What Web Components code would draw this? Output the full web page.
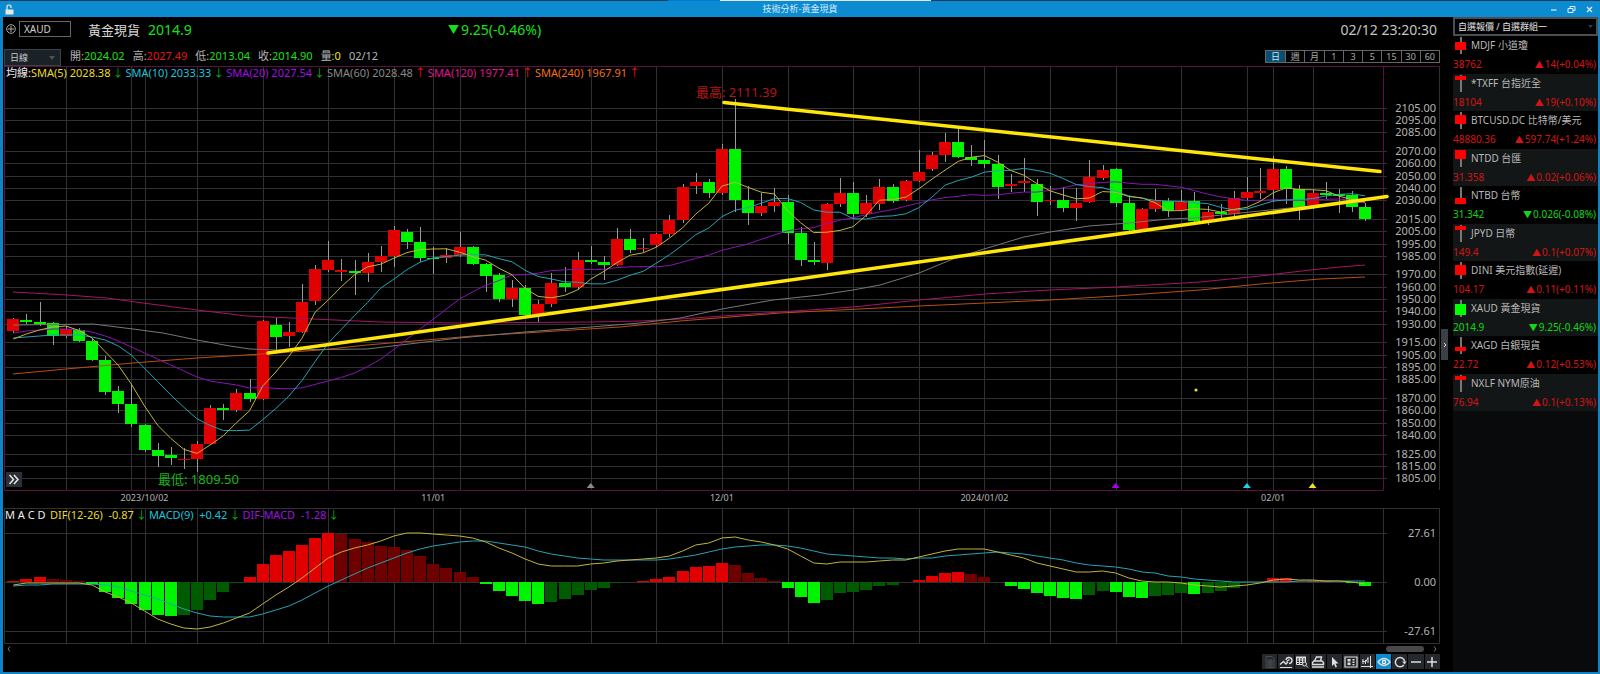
<!DOCTYPE html>
<html lang="zh-Hant">
<head>
<meta charset="utf-8">
<title>技術分析-黃金現貨</title>
<style>
html, body { margin: 0; min-height: 100%; background: #000; }
body { font-family: "Noto Sans", "Noto Sans CJK TC", sans-serif; font-size: 11px; color: #b4b4b4; }
</style>
</head>
<body>
<ta-window></ta-window>

<script>
const define = (name, html, init) => {
  const tpl = document.createElement('template');
  tpl.innerHTML = `<style>*{box-sizing:border-box}button,input,select{font-family:inherit;margin:0;border-radius:0;outline:none}</style>` + html;
  customElements.define(name, class extends HTMLElement {
    constructor() {
      super();
      this.attachShadow({ mode: 'open' }).append(tpl.content.cloneNode(true));
    }
    connectedCallback() { if (init) init(this, this.shadowRoot); }
  });
};

/* ---------- series data, in plot units ---------- */
const FIRST_X = 13.3, STEP = 13.123;
const xAt = i => +(FIRST_X + i * STEP).toFixed(1);

// direction, high, body top, body bottom, low
const candles = `
r 318 319 331 333|g 314 320 322 324|g 302 322 324 326|g 322 323 336 345|r 326 329 336 338|g 328 330 341 342|g 339 341 360 361|g 356 360 392 395|g 386 391 404 413|g 384 404 424 427
g 424 425 450 452|g 443 450 456 467|g 447 455 458 465|r 448 459 460 469|r 441 444 459 472|r 405 408 444 445|g 404 408 410 420|r 389 393 410 412|g 379 393 399 402|r 320 321 399 400
g 318 325 337 350|r 322 332 336 347|r 284 302 332 333|r 265 269 301 305|r 241 260 270 272|r 259 270 272 281|g 260 271 273 295|r 253 262 273 282|r 246 256 262 272|r 226 230 256 267
g 229 232 242 249|g 227 242 258 262|g 247 258 259 274|r 248 255 258 263|r 232 247 255 257|g 246 247 264 265|g 263 264 276 292|g 273 275 299 302|r 280 288 299 307|g 285 288 315 318
r 300 304 315 322|r 273 283 304 307|g 267 283 287 292|r 252 260 287 290|g 246 260 262 264|g 256 262 265 280|r 228 239 265 266|g 229 239 250 253|r 238 248 249 252|r 233 234 245 247
r 215 220 234 237|r 184 187 220 223|r 173 182 186 194|g 179 182 193 198|r 144 149 193 195|g 99 149 200 212|g 186 200 213 225|r 193 206 213 216|r 188 202 206 212|g 195 202 233 244
g 227 233 260 266|g 242 260 262 265|r 203 204 263 270|r 178 193 204 207|g 182 193 214 219|r 195 203 214 217|r 179 187 204 210|g 184 187 201 203|r 180 181 200 201|r 150 172 181 182
r 152 155 169 171|r 133 142 155 162|g 129 142 157 158|g 145 157 160 166|g 140 160 164 168|g 155 164 187 199|r 174 184 186 192|r 158 181 183 192|g 179 184 202 216|r 186 200 201 205
g 187 200 208 212|r 188 203 208 221|r 160 177 202 203|r 165 170 178 180|g 168 169 203 207|g 196 203 230 234|r 208 209 229 230|r 189 201 209 212|g 198 201 211 217|r 190 202 210 211
g 192 201 221 222|r 206 212 221 225|g 204 212 214 219|r 191 198 214 216|r 177 192 198 201|r 168 191 193 199|r 156 169 190 202|g 166 169 189 204|g 185 189 207 220|r 189 193 205 209
g 182 193 195 199|g 189 194 196 213|g 191 195 207 212|g 203 207 219 221`
  .trim().split(/[|\n]/).map(s => { const [d, ...n] = s.split(' '); return [d, ...n.map(Number)]; });

const closes = candles.map(c => c[0] === 'r' ? c[2] : c[3]);
const average = (n, seed) => closes.map((_, i) =>
  i < n - 1 ? seed[i] : closes.slice(i - n + 1, i + 1).reduce((a, b) => a + b) / n);

const sma5 = average(5, [339, 334, 330, 327]);
const sma10 = average(10, [338, 337, 336, 335, 335, 335, 337, 340, 346]);
const sma20 = average(20, [333, 331, 330, 329, 329, 330, 332, 336, 341, 347, 353, 359, 365, 371, 377, 381, 383, 385, 388]);
const sma60 = '13,325 93,324 133,329 163,333 197,340 230,346 250,349 277,350 367,349 459,338 525,332 591,327 640,323 680,318 722,309 773,300 820,295 853,290 880,285 919,273 953,259 984,249 1024,237 1050,232 1089,226 1129,223 1168,219 1193,218 1250,212 1310,206 1365,202';
const sma120 = '13,292 67,295 107,298 143,303 197,310 247,316 313,319 380,322 459,323 591,322 640,321 680,319 780,312 853,307 919,300 985,294 1050,290 1116,287 1200,282 1260,276 1310,270 1340,267 1365,265';
const sma240 = '13,374 66,369 133,363 197,358 262,354 320,350 367,345 473,336 525,333 620,327 680,321 780,313 919,306 985,303 1050,300 1116,296 1200,290 1260,284 1320,279 1365,277';

const monthMarks = [[10, '2023/10/02'], [32, '11/01'], [54, '12/01'], [74, '2024/01/02'], [96, '02/01']];
const columns = [4, 9, 10, 14, 19, 24, 29, 32, 34, 39, 44, 49, 54, 59, 64, 69, 74, 79, 84, 89, 94, 96, 99];
const prices = [2105, 2095, 2085, 2070, 2060, 2050, 2040, 2030, 2015, 2005, 1995, 1985, 1970, 1960, 1950, 1940, 1930, 1915, 1905, 1895, 1885, 1870, 1860, 1850, 1840, 1825, 1815, 1805];
const yPrice = p => Math.round(107.6 + (2105 - p) * 1.2357);

// histogram ends (zero line at 582) and the two lines over it
const ZERO = 582;
const bars = [581, 579, 577, 579, 580, 581, 584, 592, 598, 604, 610, 615, 616, 615, 610, 600, 592, 583, 577, 564, 555, 551, 545, 538, 533, 534, 539, 542, 546, 547, 550, 556, 564, 568, 572, 577, 584, 591, 596, 601, 604, 602, 599, 595, 590, 588, 583, 582, 581, 579, 577, 571, 567, 566, 563, 565, 573, 578, 581, 588, 597, 603, 600, 593, 592, 590, 586, 585, 582, 580, 576, 573, 572, 574, 577, 582, 586, 589, 593, 596, 598, 599, 595, 591, 592, 597, 598, 596, 595, 593, 594, 593, 591, 588, 583, 582, 578, 578, 581, 581, 581, 582, 583, 586];
const dif = [585, 583, 583, 583, 583, 583, 585, 592, 597, 603, 611, 619, 624, 628, 629, 627, 623, 618, 613, 604, 595, 587, 578, 568, 558, 552, 548, 545, 541, 536, 533, 533, 534, 535, 536, 538, 542, 548, 553, 559, 564, 566, 566, 566, 564, 563, 561, 560, 559, 558, 556, 551, 545, 543, 538, 537, 540, 542, 545, 549, 556, 563, 564, 562, 562, 562, 561, 560, 560, 557, 554, 551, 549, 549, 549, 552, 555, 558, 563, 566, 569, 572, 572, 571, 573, 578, 581, 582, 582, 583, 585, 586, 587, 586, 585, 583, 580, 579, 580, 580, 581, 581, 582, 584];
const macd = [586, 585, 585, 584, 584, 584, 584, 585, 587, 591, 595, 599, 604, 609, 613, 616, 617, 617, 617, 614, 610, 606, 600, 593, 586, 580, 574, 568, 563, 558, 553, 549, 546, 544, 542, 541, 541, 543, 545, 547, 551, 554, 556, 558, 559, 560, 560, 560, 560, 560, 559, 557, 555, 552, 549, 547, 546, 545, 545, 546, 548, 551, 554, 555, 556, 557, 558, 558, 559, 558, 558, 556, 555, 554, 553, 552, 553, 554, 556, 558, 560, 563, 565, 566, 567, 569, 572, 573, 576, 577, 579, 580, 581, 582, 582, 582, 582, 582, 581, 581, 581, 581, 581, 581];

const points = a => a.map((y, i) => `${xAt(i)},${+y.toFixed(1)}`).join(' ');
const line = (pts, colour) => `<polyline points="${pts}" stroke="${colour}"/>`;
const vLines = (y1, y2) => columns.map(i => `M${Math.round(xAt(i)) + .5} ${y1}V${y2}`).join('');

const chartCss = `
  :host{display:block;position:relative}
  svg{display:block;width:100%;height:auto;font-size:11px;fill:#b4b4b4}
  .grid{stroke:#313131;fill:none}
  .series{fill:none;stroke-width:1}
  .legend{position:absolute;top:0;left:2px;display:flex;line-height:14px;font-size:11px;color:#eee}
  slot{display:contents}`;

/* ---------- legend entry ---------- */
define('legend-item', `
<style>
  :host{display:flex;line-height:14px}
  span{white-space:pre}
  i{width:15px;text-align:center;font-style:normal;font-size:11px}
  .down{color:#0fae0f}.up{color:#f01414}
</style><span><slot></slot></span><i></i>`, (el, root) => {
  const dir = el.getAttribute('trend'), i = root.querySelector('i');
  el.style.color = el.getAttribute('colour');
  i.className = dir; i.textContent = dir === 'up' ? '↑' : '↓';
});

/* ---------- price chart ---------- */
define('price-chart', `<style>${chartCss}
  ::slotted(span){flex:0 0 22px;white-space:nowrap}
  .expand{position:absolute;left:2px;bottom:21px;width:16px;height:15px;padding:0;border:0;background:#2b3136;display:grid;place-items:center}
  .expand svg{width:12px;height:11px}
  .note{font-size:13px}
  .date{font-size:9px;text-anchor:middle}
</style>
<svg class="plot" viewBox="4 66 1436 442" role="img" aria-label="黃金現貨 日線"></svg>
<div class="legend"><slot></slot></div>
<button class="expand" aria-label="展開"><svg viewBox="0 0 12 11"><path d="M1.5 1l4 4.5-4 4.5M6 1l4 4.5-4 4.5" fill="none" stroke="#e8e8e8" stroke-width="1.5"/></svg></button>`,
(el, root) => {
  const grid = prices.map(p => `M4 ${yPrice(p) + .5}H1387`).join('') + vLines(67, 490);
  const body = candles.map(([d, h, t, b, l], i) => {
    const x = Math.round(xAt(i));
    return `<path d="M${x + .5} ${h}V${l}" stroke="#9a9a9a"/><path d="M${x - 6} ${t}h12v${Math.max(1, b - t)}h-12z" fill="${d === 'r' ? '#e00000' : '#00f400'}"/>`;
  }).join('');
  const mark = (i, c) => `<path d="M${xAt(i)} 483l4 5h-8z" fill="${c}"/>`;
  root.querySelector('.plot').innerHTML = `
    <path class="grid" d="${grid}M1439.5 66V490"/>
    <path d="M4 66.5H1440M4.5 66V490.5H1383.5V66" fill="none" stroke="#5a1040"/>
    ${body}
    <g class="series">
      ${line(sma240, '#b8500f')}${line(sma120, '#a81468')}${line(sma60, '#777')}
      ${line(points(sma20), '#8a14b4')}${line(points(sma10), '#25a3b5')}${line(points(sma5), '#c0b43c')}
    </g>
    <path d="M724 102.5L1380 171.5M268 353L1387 196.5" stroke="#ffe60a" stroke-width="3.5" stroke-linecap="round"/>
    <circle cx="1196" cy="390" r="1.6" fill="#f0e020"/>
    ${mark(44, '#8c8c8c')}${mark(84, '#a800f0')}${mark(94, '#18d8f0')}${mark(99, '#f0e020')}
    <text class="note" x="696" y="97" fill="#b81414">最高: 2111.39</text>
    <text class="note" x="158" y="484" fill="#14b814">最低: 1809.50</text>
    ${prices.map(p => `<text x="1436" y="${yPrice(p) + 4}" text-anchor="end">${p}.00</text>`).join('')}
    ${monthMarks.map(([i, t]) => `<text class="date" x="${xAt(i)}" y="501">${t}</text>`).join('')}`;
});

/* ---------- MACD panel ---------- */
define('macd-chart', `<style>${chartCss}
  .legend{left:1px}
  ::slotted(span){flex:0 0 45px;white-space:nowrap}
</style>
<svg class="plot" viewBox="4 508 1436 136" role="img" aria-label="MACD"></svg>
<div class="legend"><slot></slot></div>`, (el, root) => {
  const body = bars.map((y, i) => {
    if (y === ZERO) return '';
    const prev = bars[i - 1] ?? ZERO, up = y < ZERO;
    const bright = Math.sign(prev - ZERO) !== Math.sign(y - ZERO) || Math.abs(y - ZERO) >= Math.abs(prev - ZERO);
    const fill = up ? (bright ? '#e00000' : '#6e0000') : (bright ? '#00f400' : '#005a00');
    return `<path d="M${Math.round(xAt(i)) - 6} ${ZERO}h12V${y}h-12z" fill="${fill}"/>`;
  }).join('');
  root.querySelector('.plot').innerHTML = `
    <path class="grid" d="M4 508.5H1439.5V643.5H4.5V508M4 533.5H1387M4 582.5H1387M4 631.5H1387M1383.5 508V643${vLines(508, 643)}"/>
    ${body}
    <g class="series">${line(points(macd), '#25a3b5')}${line(points(dif), '#c0b43c')}</g>
    <text x="1436" y="537" text-anchor="end">27.61</text>
    <text x="1436" y="586" text-anchor="end">0.00</text>
    <text x="1436" y="635" text-anchor="end">-27.61</text>`;
});

/* ---------- title bar ---------- */
define('title-bar', `<style>
  :host{display:grid;grid-template-columns:1fr auto 1fr;align-items:center;height:16px;background:#0d8bd0;color:#d8ecf8;font-size:9px;line-height:16px}
  h1{margin:0;font:inherit}
  .lock{margin-left:5px;width:9px;height:11px}
  nav{display:flex;justify-content:flex-end;padding-right:2px}
  button{width:18px;height:16px;padding:0;border:0;background:none;display:grid;place-items:center}
  svg{display:block;fill:none;stroke:#e0f0fa}
</style>
<svg class="lock" viewBox="0 0 9 11"><path d="M2 6V3q0-2 2-2t2 2v1" stroke-width="1.2"/><path d="M.5 5.5h8v5h-8z" fill="#e8e8e0" stroke="none"/></svg>
<h1><slot></slot></h1>
<nav>
  <button aria-label="最小化"><svg width="9" height="9" viewBox="0 0 9 9"><path d="M2 5h5.5" stroke-width="1.2"/></svg></button>
  <button aria-label="還原"><svg width="9" height="9" viewBox="0 0 9 9"><path d="M1 3.5h5v4H1zM3 3.5V1.5h5v4H6"/></svg></button>
  <button aria-label="關閉"><svg width="9" height="9" viewBox="0 0 9 9"><path d="M2 2l5 5M7 2l-5 5" stroke-width="1.2"/></svg></button>
</nav>`);

/* ---------- symbol header ---------- */
define('quote-header', `<style>
  :host{display:flex;align-items:center;height:26px;padding:0 3px 2px 2px;font-size:14px;color:#c4c4c4}
  .add{width:10px;height:16px;padding:0;border:0;background:none;display:grid;place-items:center}
  svg{display:block;fill:none;stroke:#aaa}
  input{width:52px;height:16px;margin:0 17px 0 3px;padding:0 4px;background:#000;border:1px solid #666;color:#d0d0d0;font-size:10px}
  .quote{display:flex;flex:0 0 360px;align-items:center;gap:8px}
  h2{margin:0;font-size:13px;font-weight:400;color:#d8d8d8}
  .g{color:#19e019}
  .tri{margin-right:2px;font-size:11px;vertical-align:1px}
  time{margin-left:auto}
</style>
<button class="add" aria-label="加入"><svg width="10" height="10" viewBox="0 0 10 10"><circle cx="5" cy="5" r="4.3"/><path d="M5 2v6M2 5h6"/></svg></button>
<input aria-label="商品代碼" value="XAUD">
<div class="quote"><h2>黃金現貨</h2><span class="g">2014.9</span></div>
<span class="g"><span class="tri">▼</span>9.25(-0.46%)</span>
<time>02/12 23:20:30</time>`);

define('ohlc-bar', `<style>
  :host{display:flex;align-items:flex-end;height:23px;line-height:20px;color:#b4b4b4}
  .pick{position:relative}
  select{display:block;appearance:none;width:57px;height:17px;padding:0 5px;background:#1a2227;border:1px solid #3a4248;color:#c8c8c8;font-size:9px}
  .pick svg{position:absolute;right:6px;top:7px}
  dl{display:flex;margin:0 0 0 9px;gap:8px}
  div,dd,dt{margin:0}
  dl div{display:flex}
  .g{color:#19e019}.r{color:#e01818}.y{color:#f0e020}
  nav{display:grid;grid-template-columns:repeat(9,1fr);flex:0 0 175px;height:13px;margin:0 0 3px auto;border:1px solid #666}
  nav button{padding:0;border:0;border-left:1px solid #666;background:#000;color:#a8a8a8;font-size:9px;line-height:11px}
  nav button:first-child{border-left:0;background:#064f73;color:#d0e4ee}
</style>
<div class="pick"><select aria-label="週期"><option>日線</option></select><svg width="6" height="4" viewBox="0 0 6 4"><path d="M0 0h6L3 4z" fill="#456"/></svg></div>
<dl>
  <div><dt>開:</dt><dd class="g">2024.02</dd></div>
  <div><dt>高:</dt><dd class="r">2027.49</dd></div>
  <div><dt>低:</dt><dd class="g">2013.04</dd></div>
  <div><dt>收:</dt><dd class="g">2014.90</dd></div>
  <div><dt>量:</dt><dd class="y">0</dd></div>
  <div><dt>02/12</dt></div>
</dl>
<nav><button>日</button><button>週</button><button>月</button><button>1</button><button>3</button><button>5</button><button>15</button><button>30</button><button>60</button></nav>`);

/* ---------- bottom bars ---------- */
define('time-scroller', `<style>
  :host{display:flex;align-items:center;height:10px;padding:0 2px}
  button{width:6px;height:10px;padding:0;border:0;background:none;display:grid;place-items:center}
  .track{flex:1;display:flex;justify-content:flex-end;padding-right:8px}
  .thumb{width:38px;height:6px;border-radius:3px;background:#484848}
  svg{display:block;fill:none;stroke:#777}
</style>
<button aria-label="往前"><svg width="4" height="6" viewBox="0 0 4 6"><path d="M3 .5L1 3l2 2.5"/></svg></button>
<div class="track"><div class="thumb"></div></div>
<button aria-label="往後"><svg width="4" height="6" viewBox="0 0 4 6"><path d="M1 .5L3 3 1 5.5"/></svg></button>`);

const tools = [
  ['報表', '<path d="M3 1.5h6l2 2v9H3z" stroke="#4a4f54"/><path d="M5 5h4v6H5zM5 7h4M5 9h4M7 5v6" stroke="#4a4f54"/>'],
  ['畫線', '<path d="M1 9.5l3.5-3L7 9l2-2" stroke-width="1.4"/><path d="M7 5a3 3 0 1 1 3 3.5" stroke-width="1.4"/><path d="M7.5 6.5l3-2" stroke-width="1.4"/><path d="M1 12.5h12"/>'],
  ['查表', '<path d="M1.5 2.5h9v7h-9zM1.5 5h9M1.5 7.5h9M4.5 2.5v7M7.5 2.5v7"/><path d="M1 2.5h10" stroke-width="2"/><circle cx="9.5" cy="9" r="2" fill="#25292d"/><path d="M11 10.5l2 2"/>'],
  ['列印', '<path d="M3.5 6l2-4h5l-1 4" stroke-width="1.4"/><path d="M1.5 9.5v-2L3 6h8l1.5 1.5v2z" stroke-width="1.4"/><path d="M1 12h12" stroke-width="1.5"/>'],
  ['游標', '<path d="M4 2v9l2-2 1.500 3.500 1.500-.7L7.500 8.500h3z" fill="#e0e0e0" stroke="none"/>'],
  ['清單', '<path d="M1 2h12v10H1z" stroke-width="1.2"/><path d="M3.500 4h3v2.500h-3zM3.500 7.500h3V10h-3zM8.500 4h2v1.500h-2zM8.500 6.500h2V8h-2zM8.500 9h2v1.200h-2z" fill="#ddd" stroke="none"/>'],
  ['指標', '<path d="M1 11.500h12M10.500 1v12M3 4v5M5.500 5v4M8 2v6M2 6l3.500 1L8 3"/>'],
  ['檢視', '<path d="M1 7q6-7 12 0-6 7-12 0z" stroke-width="1.3"/><circle cx="7" cy="7" r="2.2" fill="#fff" stroke="none"/><circle cx="7" cy="7" r="1" fill="#0d8bd0" stroke="none"/>'],
  ['重整', '<path d="M10.800 10A4.700 4.700 0 1 1 11.700 6.500" stroke-width="1.5"/><path d="M9.200 6.500h4.300L11.500 9.500z" fill="#ddd" stroke="none"/>'],
  ['縮小', '<path d="M2 7h10" stroke-width="1.5"/>'],
  ['放大', '<path d="M2 7h10M7 2v10" stroke-width="1.5"/>']
];
define('chart-tools', `<style>
  :host{display:grid;grid-template-columns:repeat(11,1fr);gap:1px;width:178px;height:15px;margin-left:auto}
  button{padding:0;border:0;background:#25292d;display:grid;place-items:center}
  button.on{background:#0d8bd0}
  svg{display:block;width:14px;height:14px;fill:none;stroke:#ddd}
</style>` + tools.map(([t, p], i) => `<button aria-label="${t}"${i === 7 ? ' class="on"' : ''}><svg viewBox="0 0 14 14">${p}</svg></button>`).join(''));

/* ---------- watch list ---------- */
define('quote-row', `<style>
  :host{display:grid;grid-template:19px 1fr / 18px auto 1fr;padding-right:2px;font-size:10px;line-height:19px;white-space:nowrap}
  svg{display:block;grid-area:1/1}
  .name{grid-area:1/2/2/4;color:#b8b8b8}
  .last{grid-area:2/1/3/3}
  .diff{grid-area:2/3;text-align:right}
  .last,.diff{color:var(--tone)}
  .tri{margin-right:1px;font-size:9px}
</style>
<svg width="18" height="19"></svg><span class="name"><slot></slot></span><span class="last"></span><span class="diff"><span class="tri"></span><span class="num"></span></span>`, (el, root) => {
  const a = n => el.getAttribute(n);
  el.style.setProperty('--tone', a('dir') === 'down' ? '#12d812' : '#d41414');
  const [y, h] = a('body').split(' ');
  root.querySelector('svg').innerHTML = `<path d="M8 1v17" stroke="#777" stroke-width="2"/><path d="M2 ${y}h11v${h}H2z" fill="${a('body-colour') || '#f00'}"/>`;
  root.querySelector('.last').textContent = a('last');
  root.querySelector('.tri').textContent = a('dir') === 'down' ? '▼' : '▲';
  root.querySelector('.num').textContent = a('diff');
});

define('watch-list', `<style>
  :host{display:block;background:#080a0b}
  .pick{position:relative}
  select{display:block;appearance:none;width:100%;height:19px;padding:0 3px;background:#000;border:2px solid #4a4e52;color:#e4e4e4;font-size:9px}
  .pick svg{position:absolute;right:5px;top:8px}
  .rows{display:grid;grid-auto-rows:38px 37px}
  ::slotted(:nth-child(odd)){background:#000}
  ::slotted(:nth-child(even)){background:#131616}
</style>
<div class="pick"><select aria-label="自選群組"><option>自選報價 / 自選群組一</option></select><svg width="5" height="3" viewBox="0 0 5 3"><path d="M0 0h5L2.5 3z" fill="#246"/></svg></div>
<div class="rows"><slot></slot></div>`);

/* ---------- window ---------- */
define('ta-window', `<style>
  :host{display:flex;flex-direction:column;min-height:100vh;background:#000}
  .strip{height:1px;background:linear-gradient(90deg,#1b3a5c 668px,#0078d7 668px 720px,#dfe6ec 720px 931px,#1b3a5c 931px)}
  .frame{flex:1;display:flex;border:solid #0d84c8;border-width:0 2px 2px 3px}
  main{flex:1;min-width:0;padding-left:1px;display:flex;flex-direction:column}
  .split{flex:0 0 13px;display:flex;align-items:center}
  .split button{width:7px;height:31px;margin:0 0 0 1px;padding:0;border:0;background:#3a4045;display:grid;place-items:center}
  .split svg{display:block}
  aside{flex:0 0 145px}
  watch-list{height:100%}
</style>
<div class="strip"></div>
<title-bar>技術分析-黃金現貨</title-bar>
<div class="frame">
  <main>
    <quote-header></quote-header>
    <ohlc-bar></ohlc-bar>
    <price-chart>
      <span>均線:</span>
      <legend-item colour="#e8dc28" trend="down">SMA(5) 2028.38</legend-item>
      <legend-item colour="#18c4dc" trend="down">SMA(10) 2033.33</legend-item>
      <legend-item colour="#a010e0" trend="down">SMA(20) 2027.54</legend-item>
      <legend-item colour="#888" trend="up">SMA(60) 2028.48</legend-item>
      <legend-item colour="#e01490" trend="up">SMA(120) 1977.41</legend-item>
      <legend-item colour="#f07010" trend="up">SMA(240) 1967.91</legend-item>
    </price-chart>
    <macd-chart>
      <span>M A C D</span>
      <legend-item colour="#e8dc28" trend="down">DIF(12-26)  -0.87</legend-item>
      <legend-item colour="#18c4dc" trend="down">MACD(9)  +0.42</legend-item>
      <legend-item colour="#a010e0" trend="down">DIF-MACD  -1.28</legend-item>
    </macd-chart>
    <time-scroller></time-scroller>
    <chart-tools></chart-tools>
  </main>
  <div class="split"><button aria-label="收合"><svg width="4" height="6" viewBox="0 0 4 6"><path d="M1 1l2 2-2 2" fill="none" stroke="#ddd"/></svg></button></div>
  <aside>
    <watch-list>
      <quote-row body="6 8" last="38762" diff="14(+0.04%)">MDJF 小道瓊</quote-row>
      <quote-row body="2 4" last="18104" diff="19(+0.10%)">*TXFF 台指近全</quote-row>
      <quote-row body="4 9" last="48880.36" diff="597.74(+1.24%)">BTCUSD.DC 比特幣/美元</quote-row>
      <quote-row body="1 9" last="31.358" diff="0.02(+0.06%)">NTDD 台匯</quote-row>
      <quote-row body="12 6" last="31.342" dir="down" diff="0.026(-0.08%)">NTBD 台幣</quote-row>
      <quote-row body="2 4" last="149.4" diff="0.1(+0.07%)">JPYD 日幣</quote-row>
      <quote-row body="4 10" last="104.17" diff="0.11(+0.11%)">DINI 美元指數(延遲)</quote-row>
      <quote-row body="5 11" body-colour="#0f0" last="2014.9" dir="down" diff="9.25(-0.46%)">XAUD 黃金現貨</quote-row>
      <quote-row body="11 4" last="22.72" diff="0.12(+0.53%)">XAGD 白銀現貨</quote-row>
      <quote-row body="2 4" last="76.94" diff="0.1(+0.13%)">NXLF NYM原油</quote-row>
    </watch-list>
  </aside>
</div>`);
</script>
</body>
</html>
